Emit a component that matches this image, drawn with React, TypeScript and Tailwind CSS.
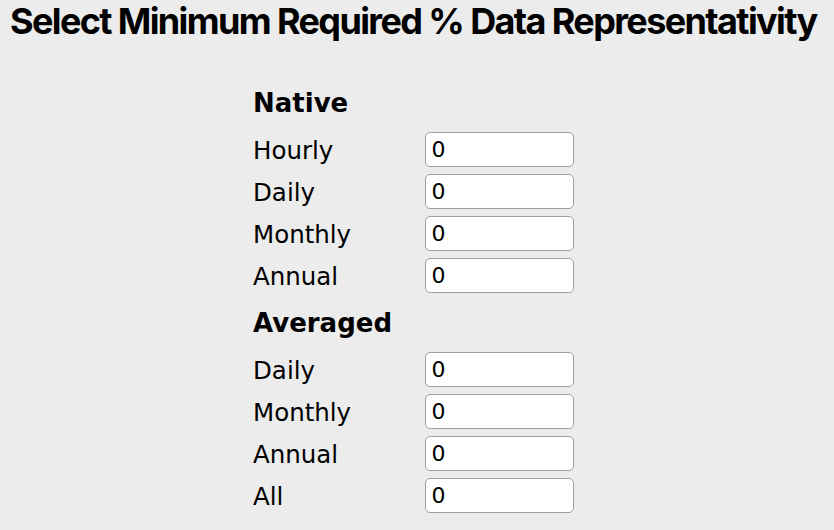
import React from "react";

const Row = ({ label }: { label: string }) => (
  <div className="flex h-[42px] items-center">
    <div className="w-[171.5px] pt-[2px] text-[24.5px] leading-[40px] text-black">{label}</div>
    <input
      readOnly
      value="0"
      className="h-[35px] w-[149px] rounded-[5px] border border-[#9f9f9f] bg-white pl-[6px] text-[22px] text-black outline-none"
      style={{ fontFamily: '"DejaVu Sans", sans-serif' }}
    />
  </div>
);

const Heading = ({ children }: { children: React.ReactNode }) => (
  <div className="h-[52px] text-[26px] font-bold leading-[52px] text-black">{children}</div>
);

export default function App() {
  return (
    <div className="h-[530px] w-[834px] overflow-hidden bg-[#ececec]">
      <div className="h-[76.5px]">
        <div
          className="-translate-y-[2px] whitespace-nowrap pl-[10px] text-[36px] font-bold leading-[46px] tracking-[-0.045em] text-black"
          style={{ fontFamily: 'Inter, sans-serif' }}
        >
          Select Minimum Required % Data Representativity
        </div>
      </div>
      <div className="pl-[253px]" style={{ fontFamily: '"DejaVu Sans", sans-serif' }}>
        <Heading>Native</Heading>
        <Row label="Hourly" />
        <Row label="Daily" />
        <Row label="Monthly" />
        <Row label="Annual" />
        <Heading>Averaged</Heading>
        <Row label="Daily" />
        <Row label="Monthly" />
        <Row label="Annual" />
        <Row label="All" />
      </div>
    </div>
  );
}
